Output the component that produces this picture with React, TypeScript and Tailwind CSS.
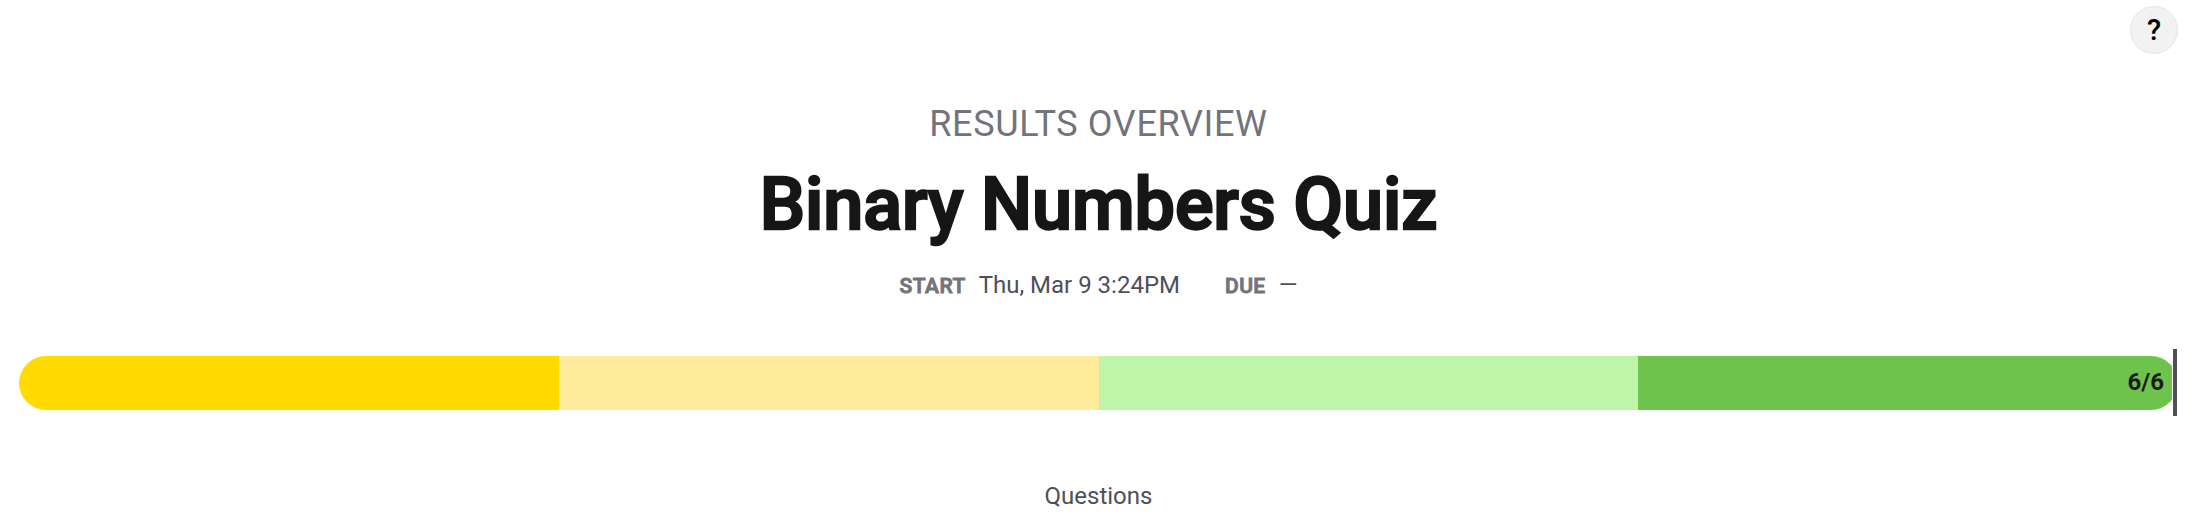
const segments = ["bg-[#ffdb00]", "bg-[#ffeb9c]", "bg-[#bff5a8]", "bg-[#6dc34b]"];

function Label({ children }: { children: string }) {
  return (
    <span className="text-[21px] font-medium tracking-[0.45px] text-[#73737d] [-webkit-text-stroke:0.9px_#73737d]">
      {children}
    </span>
  );
}

export default function App() {
  return (
    <main className="relative flex h-[526px] w-full flex-col items-center overflow-hidden bg-white pl-[19px] pr-[28px] font-['Roboto',sans-serif]">
      <button
        aria-label="Help"
        className="absolute right-[28px] top-[6px] flex h-12 w-12 items-center justify-center rounded-full border border-[#e5e5e5] bg-[#f2f2f2] text-[29px] font-medium leading-none text-black"
      >
        ?
      </button>
      <p className="mt-[102px] whitespace-nowrap text-[36px] leading-[44px] tracking-[0.64px] text-[#73737d]">
        RESULTS OVERVIEW
      </p>
      <h1 className="mt-[17px] whitespace-nowrap text-[72px] font-medium leading-[84px] tracking-[-0.1px] text-[#161616] [-webkit-text-stroke:2.4px_#161616]">
        Binary Numbers Quiz
      </h1>
      <div className="mt-[23px] flex h-[30px] items-baseline whitespace-nowrap text-2xl leading-[30px] text-[#4f4f5b]">
        <Label>START</Label>
        <span className="ml-[13px] mr-[45px]">Thu, Mar 9 3:24PM</span>
        <Label>DUE</Label>
        <span className="ml-[13px]">—</span>
      </div>
      <div className="relative mt-14 h-[54px] w-full">
        <div className="flex h-full overflow-hidden rounded-full">
          {segments.map((color) => (
            <div key={color} className={`flex-1 ${color}`} />
          ))}
        </div>
        <span className="absolute right-[14px] top-[9px] text-2xl font-bold leading-[34px] text-[#1c1c1c]">6/6</span>
        <div className="absolute -right-px -top-[7px] h-[67px] w-[7px] border-l border-r-2 border-white bg-[#4f4f5b]" />
      </div>
      <p className="mt-[71px] text-2xl leading-[30px] text-[#4f4f5b]">Questions</p>
    </main>
  );
}
